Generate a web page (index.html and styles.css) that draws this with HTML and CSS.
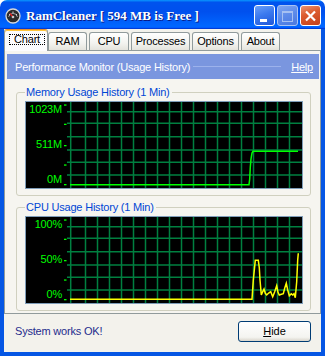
FILE: index.html
```html
<!DOCTYPE html>
<html lang="en">
<head>
  <meta charset="UTF-8">
  <title>RamCleaner</title>
  <link rel="stylesheet" href="styles.css">
</head>
<body>

<div class="window">
  <div class="titlebar">
    <svg class="app-icon" width="16" height="16" viewBox="0 0 16 16">
      <circle cx="8" cy="8" r="7" fill="#2b2b2b" stroke="#d8d8d8" stroke-width="1.3"/>
      <path d="M3.5 9 A4.6 4.6 0 0 1 12.5 9" fill="none" stroke="#9a9a9a" stroke-width="1"/>
      <path d="M4 6.5l1 .5M8 3.6v1.2M12 6.5l-1 .5" stroke="#fff" stroke-width="1"/>
      <path d="M8 9L4.8 5.4" stroke="#e52020" stroke-width="1.4"/>
      <circle cx="8" cy="9" r="1.3" fill="#c9c9c9"/>
    </svg>
    <span class="title">RamCleaner [ 594 MB is Free ]</span>
    <div class="controls">
      <span class="ctl ctl-min">
        <svg width="19" height="19"><rect x="5" y="13" width="7" height="3" fill="#fff"/></svg>
      </span>
      <span class="ctl ctl-max">
        <svg width="19" height="19"><rect x="4.5" y="5.5" width="10" height="10" fill="none" stroke="#a6c0f2"/><rect x="4" y="5" width="11" height="2" fill="#a6c0f2"/></svg>
      </span>
      <span class="ctl ctl-close">
        <svg width="19" height="19"><path d="M5 5.5l9 9M14 5.5l-9 9" stroke="#fff" stroke-width="2.2"/></svg>
      </span>
    </div>
  </div>

  <div class="frame">
    <div class="tabs">
      <span class="tab tab-active"><span class="focus">Chart</span></span>
      <span class="tab tab-ram">RAM</span>
      <span class="tab tab-cpu">CPU</span>
      <span class="tab tab-proc">Processes</span>
      <span class="tab tab-opt">Options</span>
      <span class="tab tab-about">About</span>
    </div>

    <div class="page">
      <div class="banner">
        <span class="banner-title">Performance Monitor (Usage History)</span>
        <span class="banner-rule"></span>
        <a class="help" href="#">Help</a>
      </div>

      <div class="groups">
        <fieldset class="group">
          <legend>Memory Usage History (1 Min)</legend>
          <div class="chart">
            <svg width="276" height="86" viewBox="0 0 276 86">
              <path class="grid" d="M44.7 0V86M59.5 0V86M71.5 0V86M83.5 0V86M95.5 0V86M107.5 0V86M119.5 0V86M131.5 0V86M143.5 0V86M155.5 0V86M167.5 0V86M179.5 0V86M191.5 0V86M203.5 0V86M215.5 0V86M227.5 0V86M239.5 0V86M251.5 0V86M263.5 0V86M41 9.7H276M41 21.3H276M41 34.7H276M41 48H276M41 60.3H276M41 73H276"/>
              <g class="ticks">
                <rect x="38" y="2.4" width="2.5" height="1.3"/>
                <rect x="38" y="21.7" width="2.5" height="1.3"/>
                <rect x="38" y="43" width="2.5" height="1.3"/>
                <rect x="38" y="62.4" width="2.5" height="1.3"/>
                <rect x="38" y="82" width="2.5" height="1.3"/>
              </g>
              <text class="axis" x="36" y="11">1023M</text>
              <text class="axis" x="36" y="46.3">511M</text>
              <text class="axis" x="36" y="81.3">0M</text>
              <polyline class="line-mem" points="44,82.7 223,82.7 223.7,77 224.3,65 225,57 226,51 227,49.3 272,49.3"/>
            </svg>
          </div>
        </fieldset>

        <fieldset class="group">
          <legend>CPU Usage History (1 Min)</legend>
          <div class="chart">
            <svg width="276" height="86" viewBox="0 0 276 86">
              <path class="grid" d="M44.7 0V86M59.5 0V86M71.5 0V86M83.5 0V86M95.5 0V86M107.5 0V86M119.5 0V86M131.5 0V86M143.5 0V86M155.5 0V86M167.5 0V86M179.5 0V86M191.5 0V86M203.5 0V86M215.5 0V86M227.5 0V86M239.5 0V86M251.5 0V86M263.5 0V86M41 9.7H276M41 21.3H276M41 34.7H276M41 48H276M41 60.3H276M41 73H276"/>
              <g class="ticks">
                <rect x="38" y="2.4" width="2.5" height="1.3"/>
                <rect x="38" y="21.7" width="2.5" height="1.3"/>
                <rect x="38" y="43" width="2.5" height="1.3"/>
                <rect x="38" y="62.4" width="2.5" height="1.3"/>
                <rect x="38" y="82" width="2.5" height="1.3"/>
              </g>
              <text class="axis" x="36" y="11">100%</text>
              <text class="axis" x="36" y="46.3">50%</text>
              <text class="axis" x="36" y="81.3">0%</text>
              <polyline class="line-cpu" points="44,82.3 226,82.3 227.3,63 229.3,43.3 232.3,43.3 233.3,50.7 234,63 235.3,78 236.7,74.7 238,72 239.3,76.3 240.7,78 242.7,76 244.7,74.7 246.7,79.7 248.7,74.7 250.7,68.7 252,75.3 253.3,78 255.3,77.3 257.3,76.7 258.7,71.3 260.3,66.3 261.7,73 263.3,78.7 265.3,76.7 266.7,78 268,76.7 269.3,80.7 270.7,64.7 271.7,43 272.3,36.3"/>
            </svg>
          </div>
        </fieldset>
      </div>
    </div>

    <div class="status">
      <span class="status-text">System works OK!</span>
      <button class="btn" type="button"><u>H</u>ide</button>
    </div>
  </div>
</div>

</body>
</html>
```

FILE: styles.css
```css
* {
  box-sizing: border-box;
}

body {
  margin: 0;
  background: #fff;
  font-family: "Liberation Sans", Arial, sans-serif;
  font-size: 11px;
  letter-spacing: -0.2px;
}

.window {
  width: 325px;
  height: 356px;
  display: flex;
  flex-direction: column;
}

/* title bar */
.titlebar {
  flex: none;
  height: 29px;
  display: flex;
  align-items: center;
  padding: 2px 4px 0 5px;
  border-radius: 7px 7px 0 0;
  background: linear-gradient(180deg, #0997ff, #0053ee 8%, #0050ee 40%, #0066ff 88%, #0066ff 93%, #005bff 95%, #003dd7 96%, #003dd7);
}

.app-icon {
  flex: none;
  margin-right: 5px;
}

.title {
  font: bold 13px "Liberation Serif", "Times New Roman", serif;
  letter-spacing: 0;
  color: #fff;
  text-shadow: 1px 1px #0a1883;
  white-space: nowrap;
}

.controls {
  margin-left: auto;
  display: flex;
  gap: 2px;
}

.ctl {
  width: 21px;
  height: 21px;
  border: 1px solid #fff;
  border-radius: 3px;
  display: block;
}

.ctl svg {
  display: block;
}

.ctl-min {
  background: linear-gradient(160deg, #6a9ff8 0%, #3b79ef 45%, #2157d8 100%);
}

.ctl-max {
  border-color: #a9c3f4;
  background: linear-gradient(160deg, #7ea5f1 0%, #5d8ae9 50%, #4a78e0 100%);
}

.ctl-close {
  background: linear-gradient(160deg, #eb9473 0%, #dc5d30 40%, #c5401b 100%);
}

/* window body */
.frame {
  flex: 1;
  display: flex;
  flex-direction: column;
  background: #f3f2ec;
  border: 4px solid #0556e4;
  border-top: 0;
}

.tabs {
  flex: none;
  height: 22px;
  margin-bottom: -1px;
  display: flex;
  align-items: flex-end;
  gap: 2px;
  position: relative;
  z-index: 1;
}

.tab {
  height: 18px;
  margin-bottom: 1px;
  padding: 0;
  line-height: 17px;
  text-align: center;
  color: #000;
  border: 1px solid #919b9c;
  border-bottom: 0;
  border-radius: 3px 3px 0 0;
  background: linear-gradient(180deg, #ffffff, #f3f3ef 60%, #e4e3dc);
  white-space: nowrap;
}

.tab-ram { width: 39px; }
.tab-cpu { width: 40px; }
.tab-proc { width: 59px; }
.tab-opt { width: 47px; }
.tab-about { width: 39px; }

.tab-active {
  width: 44px;
  height: 22px;
  margin-bottom: 0;
  margin-right: -2px;
  padding: 4px 2px 0 4px;
  border-top: 1px solid #e68b2c;
  box-shadow: inset 0 1px #ffc73c;
  background: #fcfcfe;
}

.focus {
  display: block;
  border: 1px dotted #000;
  line-height: 9px;
}

.page {
  flex: none;
  height: 264px;
  padding: 3px 1px 2px 2px;
  background: #f6f5f0;
  border: 1px solid #919b9c;
}

.banner {
  height: 25px;
  display: flex;
  align-items: center;
  padding: 0 6px 0 8px;
  background: #7a96df;
  color: #fff;
}

.banner-rule {
  flex: 1;
  height: 1px;
  margin: 0 10px 0 3px;
  background: #9cb2ec;
}

.help {
  color: #fff;
}

.groups {
  padding: 7px 8px 0 9px;
}

.group {
  margin: 0 0 5px;
  padding: 2px 7px 6px 8px;
  border: 1px solid #d0d0bf;
  border-radius: 3px;
  min-width: 0;
}

.group legend {
  padding: 0 2px 0 1px;
  line-height: 13px;
  color: #0046d5;
}

.chart {
  width: 278px;
  height: 88px;
  background: #000;
  border: 1px solid #7f9db9;
}

.chart svg {
  display: block;
}

.grid {
  fill: none;
  stroke: #008040;
  stroke-width: 1.5;
}

.ticks rect {
  fill: #00ff00;
}

.axis {
  fill: #00ff00;
  font-family: "Liberation Sans", Arial, sans-serif;
  font-size: 11px;
  text-anchor: end;
}

.line-mem,
.line-cpu {
  fill: none;
  stroke-width: 1.5;
}

.line-mem {
  stroke: #00ff00;
}

.line-cpu {
  stroke: #ffff00;
}

/* status row */
.status {
  flex: 1;
  display: flex;
  align-items: center;
  justify-content: space-between;
  padding: 0 10px 4px 11px;
}

.status-text {
  color: #1f2c8c;
}

.btn {
  width: 73px;
  height: 21px;
  padding: 0;
  font-family: "Liberation Sans", Arial, sans-serif;
  font-size: 11px;
  color: #000;
  border: 1px solid #003c74;
  border-radius: 3px;
  background: linear-gradient(180deg, #ffffff, #f4f4f0 80%, #d9d5cb);
}
```
